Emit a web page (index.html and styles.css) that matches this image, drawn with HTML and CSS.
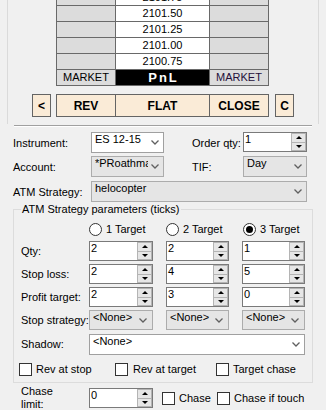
FILE: index.html
```html
<!DOCTYPE html>
<html>
<head>
  <title>Order entry</title>
  <link rel="stylesheet" href="styles.css">
</head>
<body>
  <div class="top">
    <div class="ladder">
      <div class="grid">
        <div></div><div class="price">2101.75</div><div></div>
        <div></div><div class="price">2101.50</div><div></div>
        <div></div><div class="price">2101.25</div><div></div>
        <div></div><div class="price">2101.00</div><div></div>
        <div></div><div class="price">2100.75</div><div></div>
        <div>MARKET</div><div class="pnl">PnL</div><div class="mkt-r">MARKET</div>
      </div>
    </div>
    <div class="actions">
      <button class="btn small">&lt;</button>
      <div class="btn-group">
        <button class="btn">REV</button>
        <button class="btn">FLAT</button>
        <button class="btn">CLOSE</button>
      </div>
      <button class="btn small">C</button>
    </div>
  </div>
  <div class="sep"></div>

  <div class="form">
    <div class="row">
      <div class="lbl">Instrument:</div>
      <div class="combo w73"><span class="txt">ES 12-15</span><svg class="chev" width="8" height="5" viewBox="0 0 8 5"><path d="M0.5 0.5 L4 4 L7.5 0.5"/></svg></div>
      <div class="lbl2">Order qty:</div>
      <div class="spin w64"><span class="val">1</span><span class="arrows"><i class="up"></i><i class="dn"></i></span></div>
    </div>
    <div class="row">
      <div class="lbl">Account:</div>
      <div class="combo gray w73"><span class="txt">*PRoathmann</span><svg class="chev" width="8" height="5" viewBox="0 0 8 5"><path d="M0.5 0.5 L4 4 L7.5 0.5"/></svg></div>
      <div class="lbl2">TIF:</div>
      <div class="combo gray w64"><span class="txt">Day</span><svg class="chev" width="8" height="5" viewBox="0 0 8 5"><path d="M0.5 0.5 L4 4 L7.5 0.5"/></svg></div>
    </div>
    <div class="row row3">
      <div class="lbl">ATM Strategy:</div>
      <div class="combo gray w216"><span class="txt">helocopter</span><svg class="chev" width="8" height="5" viewBox="0 0 8 5"><path d="M0.5 0.5 L4 4 L7.5 0.5"/></svg></div>
    </div>

    <fieldset class="group">
      <legend>ATM Strategy parameters (ticks)</legend>
      <div class="opts">
        <label class="opt"><span class="radio"></span>1 Target</label>
        <label class="opt"><span class="radio"></span>2 Target</label>
        <label class="opt"><span class="radio on"></span>3 Target</label>
      </div>
      <div class="prow first">
        <div class="plbl">Qty:</div>
        <div class="spin w64"><span class="val">2</span><span class="arrows"><i class="up"></i><i class="dn"></i></span></div>
        <div class="spin w63 gap"><span class="val">2</span><span class="arrows"><i class="up"></i><i class="dn"></i></span></div>
        <div class="spin w63 gap"><span class="val">1</span><span class="arrows"><i class="up"></i><i class="dn"></i></span></div>
      </div>
      <div class="prow">
        <div class="plbl">Stop loss:</div>
        <div class="spin w64"><span class="val">2</span><span class="arrows"><i class="up"></i><i class="dn"></i></span></div>
        <div class="spin w63 gap"><span class="val">4</span><span class="arrows"><i class="up"></i><i class="dn"></i></span></div>
        <div class="spin w63 gap"><span class="val">5</span><span class="arrows"><i class="up"></i><i class="dn"></i></span></div>
      </div>
      <div class="prow">
        <div class="plbl">Profit target:</div>
        <div class="spin w64"><span class="val">2</span><span class="arrows"><i class="up"></i><i class="dn"></i></span></div>
        <div class="spin w63 gap"><span class="val">3</span><span class="arrows"><i class="up"></i><i class="dn"></i></span></div>
        <div class="spin w63 gap"><span class="val">0</span><span class="arrows"><i class="up"></i><i class="dn"></i></span></div>
      </div>
      <div class="prow">
        <div class="plbl">Stop strategy:</div>
        <div class="combo gray w64 h20"><span class="txt">&lt;None&gt;</span><svg class="chev" width="8" height="5" viewBox="0 0 8 5"><path d="M0.5 0.5 L4 4 L7.5 0.5"/></svg></div>
        <div class="combo gray w63 h20 gap"><span class="txt">&lt;None&gt;</span><svg class="chev" width="8" height="5" viewBox="0 0 8 5"><path d="M0.5 0.5 L4 4 L7.5 0.5"/></svg></div>
        <div class="combo gray w63 h20 gap"><span class="txt">&lt;None&gt;</span><svg class="chev" width="8" height="5" viewBox="0 0 8 5"><path d="M0.5 0.5 L4 4 L7.5 0.5"/></svg></div>
      </div>
      <div class="prow shadow">
        <div class="plbl">Shadow:</div>
        <div class="combo w216"><span class="txt">&lt;None&gt;</span><svg class="chev" width="8" height="5" viewBox="0 0 8 5"><path d="M0.5 0.5 L4 4 L7.5 0.5"/></svg></div>
      </div>
      <div class="checks">
        <label class="chk c1"><span class="box"></span>Rev at stop</label>
        <label class="chk c2"><span class="box"></span>Rev at target</label>
        <label class="chk"><span class="box"></span>Target chase</label>
      </div>
    </fieldset>

    <div class="chase">
      <div class="clbl">Chase<br>limit:</div>
      <div class="spin w64"><span class="val">0</span><span class="arrows"><i class="up"></i><i class="dn"></i></span></div>
      <label class="chk c3"><span class="box"></span>Chase</label>
      <label class="chk"><span class="box"></span>Chase if touch</label>
    </div>
  </div>
</body>
</html>
```

FILE: styles.css
```css
body {
  margin: 0;
  width: 326px;
  height: 410px;
  overflow: hidden;
  background-color: #f0f0f0;
  font-family: "Liberation Sans", Arial, sans-serif;
  font-size: 11px;
  line-height: 13px;
  color: #000;
}

/* price ladder + action buttons */
.top {
  margin: 0 7px;
  height: 124px;
  border-left: 1px solid #dadada;
  border-right: 1px solid #dadada;
}
.ladder {
  margin-left: 48px;
  width: 213px;
  height: 86px;
  display: flex;
  flex-direction: column;
  justify-content: flex-end;
  overflow: hidden;
}
.grid {
  flex-shrink: 0;
  display: grid;
  grid-template-columns: 58px 93px 58px;
  grid-auto-rows: 15px;
  gap: 1px;
  padding: 1px;
  background-color: #696969;
}
.grid div {
  background-color: #dcdcdc;
  text-align: center;
  line-height: 15px;
}
.grid .price {
  background-color: #fff;
}
.grid .pnl {
  background-color: #000;
  color: #fff;
  font-weight: bold;
  font-size: 13px;
  letter-spacing: 2px;
  text-indent: 2px;
}
.grid .mkt-r {
  color: #24103a;
}
.actions {
  display: flex;
  margin-top: 8px;
  padding-left: 24px;
}
.btn {
  box-sizing: border-box;
  height: 23px;
  padding: 0;
  border: 1px solid #646464;
  background-color: #faebd7;
  font: bold 12px "Liberation Sans", Arial, sans-serif;
  color: #000;
}
.btn.small {
  width: 19px;
}
.btn-group {
  display: grid;
  grid-template-columns: 58px 93px 58px;
  gap: 1px;
  padding: 1px;
  margin: 0 6px 0 5px;
  height: 23px;
  box-sizing: border-box;
  background-color: #646464;
}
.btn-group .btn {
  border: none;
  height: 21px;
}
.sep {
  margin: 1px 14px 0;
  border-top: 1px solid #a0a0a0;
  border-bottom: 1px solid #fff;
}

/* form */
.form {
  padding: 5px 0 0 13px;
}
.row {
  display: flex;
  align-items: flex-start;
  height: 21px;
}
.row + .row {
  margin-top: 3px;
}
.row.row3 {
  margin-top: 4px;
}
.lbl {
  width: 78px;
  padding-top: 5px;
  white-space: nowrap;
}
.lbl2 {
  width: 51px;
  margin-left: 28px;
  padding-top: 5px;
  white-space: nowrap;
}
.combo {
  box-sizing: border-box;
  display: flex;
  height: 21px;
  padding: 0 4px 0 3px;
  border: 1px solid #a0a0a0;
  background-color: #fff;
}
.combo.gray {
  background-color: #e5e5e5;
  border-color: #acacac;
}
.combo.h20 {
  height: 20px;
  padding-right: 5px;
}
.combo .txt {
  flex: 1;
  overflow: hidden;
  white-space: nowrap;
  margin-right: 3px;
}
.chev {
  align-self: center;
  flex-shrink: 0;
}
.chev path {
  fill: none;
  stroke: #606060;
  stroke-width: 1.3;
}
.w63 { width: 63px; }
.w64 { width: 64px; }
.w73 { width: 73px; }
.w216 { width: 216px; }
.gap { margin-left: 13px; }

.spin {
  box-sizing: border-box;
  display: flex;
  height: 20px;
  border: 1px solid #7a7a7a;
  background-color: #fff;
}
.spin .val {
  flex: 1;
  padding-left: 1px;
}
.spin .arrows {
  width: 15px;
  display: flex;
  flex-direction: column;
}
.spin .arrows i {
  flex: 1;
  display: flex;
  align-items: center;
  justify-content: center;
  border: 1px solid #b4b4b4;
  background-color: #e6e6e6;
}
.spin .arrows i + i {
  border-top: none;
}
.spin .arrows i::after {
  content: "";
  border-left: 3px solid transparent;
  border-right: 3px solid transparent;
}
.spin .up::after {
  border-bottom: 3px solid #000;
}
.spin .dn::after {
  border-top: 3px solid #000;
}

/* ATM parameters group */
.group {
  box-sizing: border-box;
  width: 300px;
  margin: 1px 0 0;
  padding: 6px 6px 6px 7px;
  border: 1px solid #dcdcdc;
}
.group legend {
  padding: 0 1px;
}
.opts {
  display: flex;
  height: 14px;
  padding-left: 68px;
}
.opt {
  display: flex;
  align-items: center;
  gap: 4px;
  width: 77px;
}
.opt + .opt + .opt {
  width: auto;
}
.radio {
  box-sizing: border-box;
  width: 13px;
  height: 13px;
  border: 1px solid #333;
  border-radius: 50%;
  background-color: #fff;
  display: flex;
  align-items: center;
  justify-content: center;
}
.radio.on::after {
  content: "";
  width: 7px;
  height: 7px;
  border-radius: 50%;
  background-color: #000;
}
.prow {
  display: flex;
  align-items: flex-start;
  height: 20px;
  margin-top: 3px;
}
.prow.first {
  margin-top: 5px;
}
.prow.shadow {
  height: 21px;
  margin-top: 4px;
}
.plbl {
  width: 68px;
  padding-top: 4px;
  white-space: nowrap;
}
.checks {
  display: flex;
  margin: 8px 0 0 -2px;
  height: 13px;
}
.chk {
  display: flex;
  align-items: center;
  gap: 4px;
  white-space: nowrap;
}
.chk .box {
  box-sizing: border-box;
  width: 13px;
  height: 13px;
  border: 1px solid #333;
  background-color: #fff;
}
.checks .c1 { width: 96px; }
.checks .c2 { width: 101px; gap: 5px; }

.chase {
  display: flex;
  align-items: flex-start;
  margin-top: 5px;
  padding-left: 8px;
}
.clbl {
  width: 68px;
  margin-top: -3px;
}
.chase .chk {
  margin-top: 4px;
}
.chase .c3 {
  margin-left: 9px;
  width: 55px;
}
```
